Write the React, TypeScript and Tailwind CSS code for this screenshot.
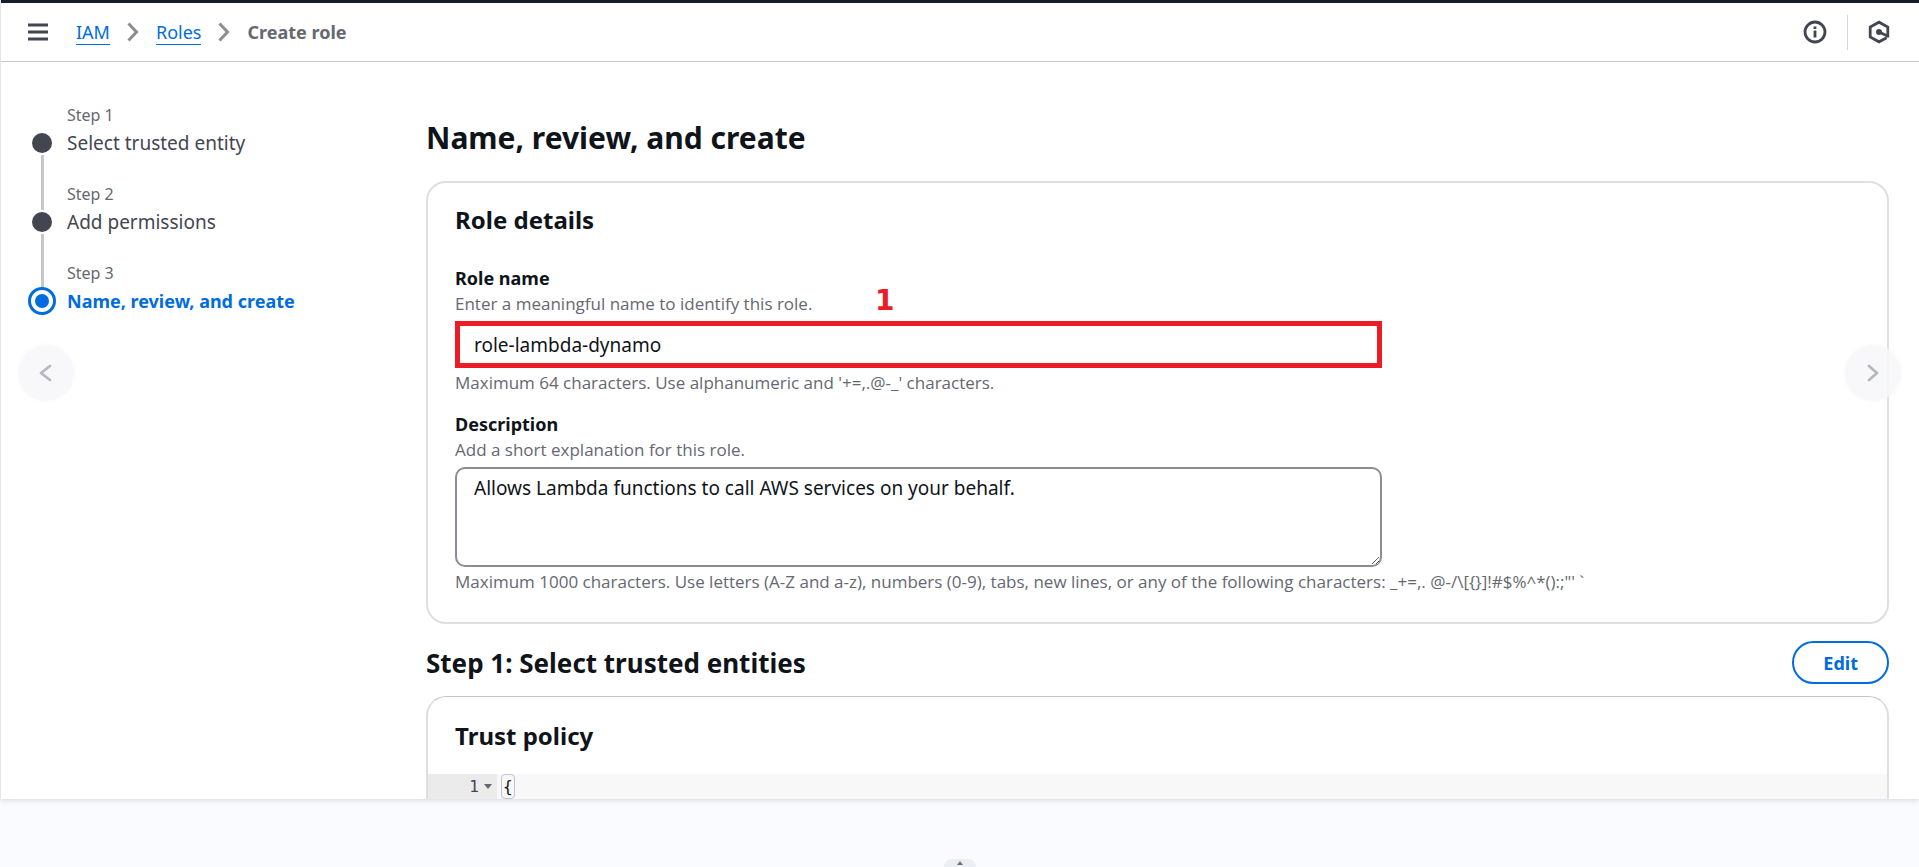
import React, { useState } from "react";

type Step = { label: string; title: string; current?: boolean };

const steps: Step[] = [
  { label: "Step 1", title: "Select trusted entity" },
  { label: "Step 2", title: "Add permissions" },
  { label: "Step 3", title: "Name, review, and create", current: true },
];

function MenuIcon() {
  return (
    <svg width="20" height="18" viewBox="0 0 20 18" fill="none" stroke="#424650" strokeWidth="2.8" aria-hidden="true">
      <path d="M0 2h20M0 9h20M0 16h20" />
    </svg>
  );
}

function Separator() {
  return (
    <svg width="12" height="20" viewBox="0 0 12 20" fill="none" stroke="#8c8c94" strokeWidth="3" aria-hidden="true">
      <path d="M1.5 1.5L9.5 10L1.5 18.5" />
    </svg>
  );
}

function InfoIcon() {
  return (
    <svg width="24" height="24" viewBox="0 0 24 24" fill="none" stroke="#424650" strokeWidth="2.8" aria-hidden="true">
      <circle cx="12" cy="12" r="10" />
      <path d="M12 10.5V17.5M12 6.5V9" strokeWidth="2.8" />
    </svg>
  );
}

function HexIcon() {
  return (
    <svg width="22" height="24" viewBox="0 0 22 24" fill="none" stroke="#424650" strokeWidth="2.8" aria-hidden="true">
      <path d="M19.8 17.4V7L11 2.2L2.2 7V17L11 21.8L18.6 17.7" />
      <path d="M11 12L19.5 16" />
      <circle cx="11" cy="12" r="3" fill="#424650" stroke="none" />
    </svg>
  );
}

function StepItem({ step, first }: { step: Step; first: boolean }) {
  return (
    <li className="grid grid-cols-[28px_1fr] gap-x-[11px]">
      {!first && <span className="-my-1 w-[3px] justify-self-center bg-[#c6c6cd]" />}
      <span
        className={
          first
            ? "col-start-2 text-base leading-6 text-[#656871]"
            : "col-start-2 pt-[23px] text-base leading-6 text-[#656871]"
        }
      >
        {step.label}
      </span>
      <span className="flex h-8 items-center justify-center">
        {step.current ? (
          <span className="flex size-7 items-center justify-center rounded-full border-[3px] border-[#006ce0]">
            <span className="size-[14px] rounded-full bg-[#006ce0]" />
          </span>
        ) : (
          <span className="size-5 rounded-full bg-[#424650]" />
        )}
      </span>
      <a
        href="#"
        aria-current={step.current ? "step" : undefined}
        className={
          step.current
            ? "text-lg leading-8 font-bold text-[#006ce0]"
            : "text-[19px] leading-8 text-[#424650]"
        }
      >
        {step.title}
      </a>
    </li>
  );
}

function Chevron({ flip }: { flip?: boolean }) {
  return (
    <svg width="14" height="18" viewBox="0 0 14 18" fill="none" stroke="#b4b9c1" strokeWidth="2.8" strokeLinecap="round" strokeLinejoin="round" aria-hidden="true">
      <path d={flip ? "M3 2L11 9L3 16" : "M11 2L2 9L11 16"} />
    </svg>
  );
}

function Hint({ children }: { children: React.ReactNode }) {
  return <p className="font-['Open_Sans',sans-serif] text-[17px] leading-6 text-[#656871]">{children}</p>;
}

export default function App() {
  const [name, setName] = useState("role-lambda-dynamo");
  const [description, setDescription] = useState(
    "Allows Lambda functions to call AWS services on your behalf."
  );

  return (
    <div className="relative flex h-screen flex-col overflow-hidden bg-[#fafbff] font-['Noto_Sans',sans-serif] text-[#0f141a]">
      <div className="flex min-h-0 flex-1 flex-col overflow-hidden border-l border-[#e4e4e8] bg-white shadow-[0_1px_6px_rgba(0,7,22,0.15)]">
        <div className="h-[3px] shrink-0 bg-[#161d26]" />
        <header className="flex h-[59px] shrink-0 items-center justify-between border-b border-[#c6c6cd] pr-[29px] pl-[27px]">
          <div className="flex items-center">
            <button type="button" aria-label="Open navigation">
              <MenuIcon />
            </button>
            <nav aria-label="Breadcrumbs" className="ml-7 flex items-center gap-[17px] text-lg leading-6">
              <a href="#" className="border-b border-[#006ce0] text-[#006ce0]">IAM</a>
              <Separator />
              <a href="#" className="border-b border-[#006ce0] text-[#006ce0]">Roles</a>
              <Separator />
              <span className="font-bold text-[#656871]">Create role</span>
            </nav>
          </div>
          <div className="flex items-center gap-5">
            <button type="button" aria-label="Info"><InfoIcon /></button>
            <span className="h-[35px] w-px bg-[#d5d5da]" />
            <button type="button" aria-label="Tools"><HexIcon /></button>
          </div>
        </header>

        <div className="flex gap-7 pr-[30px] pl-[27px]">
          <nav aria-label="Steps" className="w-[370px] shrink-0 pt-[41px]">
            <ol>
              {steps.map((step, i) => (
                <StepItem key={step.label} step={step} first={i === 0} />
              ))}
            </ol>
          </nav>

          <main className="min-w-0 flex-1 pt-[58px]">
            <h1 className="text-[30px] leading-9 font-bold">Name, review, and create</h1>

            <section className="mt-[25px] rounded-[20px] border-2 border-[#dedee3] px-[27px] pt-[19px] pb-7">
              <h2 className="text-[24px] leading-9 font-bold">Role details</h2>

              <div className="mt-[26px]">
                <label htmlFor="role-name" className="block text-lg leading-7 font-bold">Role name</label>
                <Hint>Enter a meaningful name to identify this role.</Hint>
                <div className="relative mt-[5px] w-[66%]">
                  <input
                    id="role-name"
                    type="text"
                    value={name}
                    onChange={(e) => setName(e.target.value)}
                    className="block h-[47px] w-full border-[5px] border-[#ed1c24] px-[14px] text-[19px] outline-none"
                  />
                  <span className="absolute bottom-full left-[420px] font-['DejaVu_Sans',sans-serif] text-[28px] leading-10 font-bold text-[#ed1c24]">1</span>
                </div>
                <div className="mt-[3px]">
                  <Hint>Maximum 64 characters. Use alphanumeric and '+=,.@-_' characters.</Hint>
                </div>
              </div>

              <div className="mt-[15px]">
                <label htmlFor="role-description" className="block text-lg leading-7 font-bold">Description</label>
                <Hint>Add a short explanation for this role.</Hint>
                <textarea
                  id="role-description"
                  value={description}
                  onChange={(e) => setDescription(e.target.value)}
                  className="mt-[5px] block h-[100px] w-[66%] resize rounded-[10px] border-2 border-[#8c8c94] px-[17px] py-[5px] text-[19px] leading-7 outline-none"
                />
                <div className="mt-[3px]">
                  <Hint>
                    {"Maximum 1000 characters. Use letters (A-Z and a-z), numbers (0-9), tabs, new lines, or any of the following characters: _+=,. @-/\\[{}]!#$%^*():;\"' `"}
                  </Hint>
                </div>
              </div>
            </section>

            <div className="mt-[17px] flex items-center justify-between">
              <h2 className="text-[26px] leading-9 font-bold">Step 1: Select trusted entities</h2>
              <button type="button" className="h-[43px] rounded-full border-2 border-[#006ce0] px-[29px] text-lg leading-9 font-bold text-[#006ce0]">
                Edit
              </button>
            </div>

            <section className="mt-3 h-80 overflow-hidden rounded-[20px] border-2 border-t border-[#dedee3] border-t-[#c6c6cd]">
              <h3 className="px-[27px] pt-[21px] pb-5 text-[24px] leading-9 font-bold">Trust policy</h3>
              <div className="flex h-[25px] bg-[#f8f8f8] font-['DejaVu_Sans_Mono',monospace] text-base">
                <div className="flex w-[69px] items-center justify-end gap-[5px] bg-[#ebebeb] pr-[5px] text-[#424650]">
                  <span>1</span>
                  <span className="border-x-4 border-t-[5px] border-x-transparent border-t-[#656871]" />
                </div>
                <code className="ml-1 rounded border border-[#c0c0d8] px-px font-['DejaVu_Sans_Mono',monospace] leading-6">{"{"}</code>
              </div>
            </section>
          </main>
        </div>
      </div>

      <footer className="flex h-[68px] shrink-0 items-end justify-center">
        <button type="button" aria-label="Expand panel" className="flex h-2 w-8 items-center justify-center rounded-t-lg bg-[#ebeef2]">
          <span className="border-x-[3px] border-b-4 border-x-transparent border-b-[#6b7280]" />
        </button>
      </footer>

      <button type="button" aria-label="Previous" className="absolute top-[345px] left-[18px] flex size-14 items-center justify-center rounded-full bg-[#f7f7f9]/90 shadow-[0_0_4px_#f7f7f9]">
        <Chevron />
      </button>
      <button type="button" aria-label="Next" className="absolute top-[345px] right-[18px] flex size-14 items-center justify-center rounded-full bg-[#f7f7f9]/90 shadow-[0_0_4px_#f7f7f9]">
        <Chevron flip />
      </button>
    </div>
  );
}
